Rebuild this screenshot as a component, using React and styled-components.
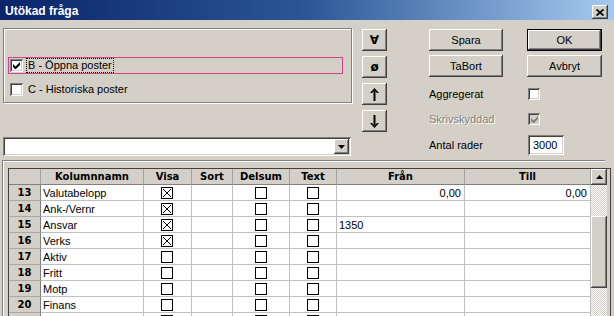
import React from 'react';
import styled, { createGlobalStyle } from 'styled-components';

const GlobalStyle = createGlobalStyle`
  html, body {
    margin: 0;
    padding: 0;
    background: #d4d0c8;
  }
  body {
    font-family: "Liberation Sans", Arial, sans-serif;
    font-size: 11px;
    color: #000;
  }
`;

const raised = `
  background: #d4d0c8;
  box-shadow: inset -1px -1px #404040, inset 1px 1px #fff, inset -2px -2px #808080, inset 2px 2px #d4d0c8;
`;

const sunken = `
  box-shadow: inset 1px 1px #808080, inset -1px -1px #fff, inset 2px 2px #404040, inset -2px -2px #d4d0c8;
`;

// the last row is cut by the window edge, so it carries no text
const ROWS = [
  { n: 13, name: 'Valutabelopp', visa: true, fran: '0,00', till: '0,00' },
  { n: 14, name: 'Ank-/Vernr', visa: true },
  { n: 15, name: 'Ansvar', visa: true, fran: '1350', franLeft: true },
  { n: 16, name: 'Verks', visa: true },
  { n: 17, name: 'Aktiv' },
  { n: 18, name: 'Fritt' },
  { n: 19, name: 'Motp' },
  { n: 20, name: 'Finans' },
  { n: 21, name: '', hidden: true },
];

const CheckMark = ({ color = '#000' }) => (
  <svg width="7" height="7" viewBox="0 0 7 7">
    <path d="M0 2v3l2 2h1l4-4V0L2.5 4.5z" fill={color} />
  </svg>
);

const GridBox = ({ checked }) => (
  <svg width="12" height="12" viewBox="0 0 12 12">
    <rect x="0.5" y="0.5" width="11" height="11" fill="#fff" stroke="#000" />
    {checked && <path d="M2 2L10 10M10 2L2 10" stroke="#000" strokeWidth="1" />}
  </svg>
);

const Arrow = ({ down }) => (
  <svg width="9" height="13" viewBox="0 0 9 13">
    <g transform={down ? 'rotate(180 4.5 6.5)' : undefined}>
      <path d="M3.5 3h2v10h-2z" fill="#000" />
      <path d="M4.5 0L0 5h2l2.5-2.5L7 5h2z" fill="#000" />
    </g>
  </svg>
);

export default function App() {
  return (
    <>
      <GlobalStyle />
      <Window>
        <TitleBar>
          <Title>Utökad fråga</Title>
          <CloseButton>
            <svg width="8" height="7" viewBox="0 0 8 7">
              <path d="M0.5 0.5L7.5 6.5M7.5 0.5L0.5 6.5" stroke="#000" strokeWidth="1.8" />
            </svg>
          </CloseButton>
        </TitleBar>

        <TopArea>
          <LeftCol>
            <GroupBox>
              <OptionLine $selected>
                <Check $checked>
                  <CheckMark />
                </Check>
                <FocusLabel>B - Öppna poster</FocusLabel>
              </OptionLine>
              <OptionLine>
                <Check />
                <Label>C - Historiska poster</Label>
              </OptionLine>
            </GroupBox>
            <Combo>
              <ComboButton>
                <svg width="7" height="4" viewBox="0 0 7 4">
                  <path d="M0 0h7L3.5 4z" fill="#000" />
                </svg>
              </ComboButton>
            </Combo>
          </LeftCol>

          <ArrowCol>
            <ToolButton><Glyph>∀</Glyph></ToolButton>
            <ToolButton><Glyph>ø</Glyph></ToolButton>
            <ToolButton><Arrow /></ToolButton>
            <ToolButton><Arrow down /></ToolButton>
          </ArrowCol>

          <RightArea>
            <ButtonGrid>
              <PushButton>Spara</PushButton>
              <PushButton $default>OK</PushButton>
              <PushButton>TaBort</PushButton>
              <PushButton>Avbryt</PushButton>
            </ButtonGrid>
            <OptionRow $top={11}>
              <OptionLabel>Aggregerat</OptionLabel>
              <Check $small />
            </OptionRow>
            <OptionRow $top={13}>
              <OptionLabel $disabled>Skrivskyddad</OptionLabel>
              <Check $small $disabled>
                <CheckMark color="#808080" />
              </Check>
            </OptionRow>
            <OptionRow $top={10}>
              <OptionLabel>Antal rader</OptionLabel>
              <NumberInput>3000</NumberInput>
            </OptionRow>
          </RightArea>
        </TopArea>

        <Frame>
          <Grid>
            <Table>
              <HeadCell />
              <HeadCell>Kolumnnamn</HeadCell>
              <HeadCell>Visa</HeadCell>
              <HeadCell>Sort</HeadCell>
              <HeadCell>Delsum</HeadCell>
              <HeadCell>Text</HeadCell>
              <HeadCell>Från</HeadCell>
              <HeadCell>Till</HeadCell>
              {ROWS.map((r) => (
                <React.Fragment key={r.n}>
                  <RowHead>{r.hidden ? '' : r.n}</RowHead>
                  <Cell>{r.name}</Cell>
                  <Cell $center><GridBox checked={r.visa} /></Cell>
                  <Cell />
                  <Cell $center><GridBox /></Cell>
                  <Cell $center><GridBox /></Cell>
                  <Cell $right={!r.franLeft}>{r.fran}</Cell>
                  <Cell $right>{r.till}</Cell>
                </React.Fragment>
              ))}
            </Table>
            <ScrollBar>
              <ScrollButton>
                <svg width="7" height="4" viewBox="0 0 7 4">
                  <path d="M0 4h7L3.5 0z" fill="#000" />
                </svg>
              </ScrollButton>
              <Track $h={31} />
              <Thumb />
              <Track $h={60} />
            </ScrollBar>
          </Grid>
        </Frame>
      </Window>
    </>
  );
}

const Window = styled.div`
  width: 614px;
  height: 316px;
  overflow: hidden;
  background: #d4d0c8;
`;

const TitleBar = styled.div`
  height: 20px;
  display: flex;
  align-items: flex-start;
  justify-content: space-between;
  padding: 0 6px 0 5px;
  background: linear-gradient(to right, #0a246a 0%, #2b5796 50%, #a6caf0 100%);
`;

const Title = styled.div`
  margin-top: 4px;
  font-weight: bold;
  font-size: 12px;
  line-height: 14px;
  color: #fff;
`;

const CloseButton = styled.div`
  ${raised}
  margin-top: 5px;
  width: 16px;
  height: 14px;
  display: flex;
  align-items: center;
  justify-content: center;
`;

const TopArea = styled.div`
  display: flex;
  align-items: flex-start;
  padding-left: 3px;
  margin-top: 8px;
`;

const LeftCol = styled.div`
  width: 349px;
  display: flex;
  flex-direction: column;
`;

const GroupBox = styled.div`
  box-sizing: border-box;
  height: 75px;
  border: 1px solid #808080;
  box-shadow: 1px 1px 0 #fff, inset 1px 1px 0 #fff;
  padding: 28px 0 0 4px;
`;

const OptionLine = styled.div`
  box-sizing: border-box;
  width: 335px;
  height: 17px;
  display: flex;
  align-items: center;
  padding-left: 1px;
  border: 1px solid ${(p) => (p.$selected ? '#d2428a' : 'transparent')};
  margin-top: ${(p) => (p.$selected ? 0 : 7)}px;
`;

const Check = styled.div`
  box-sizing: border-box;
  width: ${(p) => (p.$small ? 12 : 13)}px;
  height: ${(p) => (p.$small ? 12 : 13)}px;
  flex: none;
  background: ${(p) => (p.$disabled ? '#d4d0c8' : '#fff')};
  ${sunken}
  display: flex;
  align-items: center;
  justify-content: center;
`;

const Label = styled.span`
  margin-left: 4px;
  padding: 0 1px;
  line-height: 13px;
`;

const FocusLabel = styled(Label)`
  outline: 1px dotted #000;
`;

const Combo = styled.div`
  box-sizing: border-box;
  margin-top: 34px;
  width: 348px;
  height: 19px;
  background: #fff;
  ${sunken}
  display: flex;
  justify-content: flex-end;
  padding: 2px;
`;

const ComboButton = styled.div`
  ${raised}
  width: 15px;
  height: 15px;
  display: flex;
  align-items: center;
  justify-content: center;
`;

const ArrowCol = styled.div`
  margin: 1px 0 0 10px;
  display: flex;
  flex-direction: column;
  gap: 5px;
`;

const ToolButton = styled.div`
  ${raised}
  width: 25px;
  height: 22px;
  display: flex;
  align-items: center;
  justify-content: center;
`;

const Glyph = styled.span`
  font-family: "DejaVu Sans", sans-serif;
  font-weight: bold;
  font-size: 12px;
  line-height: 12px;
`;

const RightArea = styled.div`
  margin: 1px 0 0 42px;
  display: flex;
  flex-direction: column;
`;

const ButtonGrid = styled.div`
  display: grid;
  grid-template-columns: 74px 75px;
  grid-auto-rows: 22px;
  column-gap: 24px;
  row-gap: 4px;
`;

const PushButton = styled.div`
  ${raised}
  display: flex;
  align-items: center;
  justify-content: center;
  ${(p) =>
    p.$default &&
    `box-shadow: inset 0 0 0 1px #000, inset -2px -2px #404040, inset 2px 2px #fff, inset -3px -3px #808080;`}
`;

const OptionRow = styled.div`
  display: flex;
  align-items: center;
  margin-top: ${(p) => p.$top}px;
`;

const OptionLabel = styled.div`
  width: 99px;
  color: ${(p) => (p.$disabled ? '#808080' : '#000')};
  text-shadow: ${(p) => (p.$disabled ? '1px 1px 0 #fff' : 'none')};
`;

const NumberInput = styled.div`
  box-sizing: border-box;
  width: 36px;
  height: 20px;
  background: #fff;
  ${sunken}
  padding: 0 0 0 5px;
  display: flex;
  align-items: center;
`;

const Frame = styled.div`
  margin: 4px 0 0 2px;
  width: 603px;
  border-top: 1px solid #808080;
  border-left: 1px solid #808080;
  box-shadow: inset 1px 1px 0 #fff;
  padding: 7px 0 0 5px;
  box-sizing: border-box;
`;

const Grid = styled.div`
  width: 603px;
  display: flex;
  border: 1px solid #404040;
  border-bottom: none;
  background: #d4d0c8;
  box-sizing: border-box;
  padding-right: 3px;
`;

const Table = styled.div`
  display: grid;
  grid-template-columns: 32px 103px 48px 41px 57px 47px 128px 126px;
  grid-auto-rows: 16px;
  background: #fff;
`;

const HeadCell = styled.div`
  box-sizing: border-box;
  background: #d4d0c8;
  border-right: 1px solid #a0a0a0;
  border-bottom: 1px solid #808080;
  font-family: "DejaVu Sans", sans-serif;
  font-weight: bold;
  font-size: 10px;
  display: flex;
  align-items: center;
  justify-content: center;
`;

const RowHead = styled(HeadCell)`
  border-right: 1px solid #808080;
  border-bottom: 1px solid #a8a8a8;
`;

const Cell = styled.div`
  box-sizing: border-box;
  border-right: 1px solid #c0c0c0;
  border-bottom: 1px solid #c0c0c0;
  display: flex;
  align-items: center;
  justify-content: ${(p) => (p.$center ? 'center' : p.$right ? 'flex-end' : 'flex-start')};
  padding: 0 3px 0 2px;
  white-space: nowrap;
  overflow: hidden;
`;

const ScrollBar = styled.div`
  width: 16px;
  display: flex;
  flex-direction: column;
`;

const ScrollButton = styled.div`
  ${raised}
  height: 16px;
  display: flex;
  align-items: center;
  justify-content: center;
`;

const Track = styled.div`
  height: ${(p) => p.$h}px;
  background: repeating-conic-gradient(#d4d0c8 0 25%, #fff 0 50%) 0 0 / 2px 2px;
`;

const Thumb = styled.div`
  ${raised}
  height: 72px;
`;
